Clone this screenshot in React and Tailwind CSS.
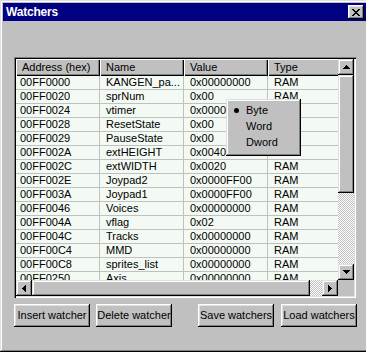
import React from "react";

const raised =
  "shadow-[inset_-1px_-1px_#000,inset_1px_1px_#dfdfdf,inset_-2px_-2px_#808080,inset_2px_2px_#fff]";
const btnRaised =
  "shadow-[inset_-1px_-1px_#000,inset_1px_1px_#fff,inset_-2px_-2px_#808080,inset_2px_2px_#dfdfdf]";
const dither =
  "[background-image:repeating-conic-gradient(#c0c0c0_0_25%,#fff_0_50%)] [background-size:2px_2px]";

const rows = [
  ["00FF0000", "KANGEN_pa...", "0x00000000", "RAM"],
  ["00FF0020", "sprNum", "0x00", "RAM"],
  ["00FF0024", "vtimer", "0x0000", "RAM"],
  ["00FF0028", "ResetState", "0x00", "RAM"],
  ["00FF0029", "PauseState", "0x00", "RAM"],
  ["00FF002A", "extHEIGHT", "0x0040", "RAM"],
  ["00FF002C", "extWIDTH", "0x0020", "RAM"],
  ["00FF002E", "Joypad2", "0x0000FF00", "RAM"],
  ["00FF003A", "Joypad1", "0x0000FF00", "RAM"],
  ["00FF0046", "Voices", "0x00000000", "RAM"],
  ["00FF004A", "vflag", "0x02", "RAM"],
  ["00FF004C", "Tracks", "0x00000000", "RAM"],
  ["00FF00C4", "MMD", "0x00000000", "RAM"],
  ["00FF00C8", "sprites_list", "0x00000000", "RAM"],
  ["00FF0250", "Axis", "0x00000000", "RAM"],
];

function Arrow({ dir }) {
  const paths = {
    up: "M3 0h1v1h1v1h1v1h1v1H0V3h1V2h1V1h1z",
    down: "M0 0h7v1H6v1H5v1H4v1H3V3H2V2H1V1H0z",
    left: "M3 0h1v7H3V6H2V5H1V4H0V3h1V2h1V1h1z",
    right: "M0 0h1v1h1v1h1v1h1v1H3v1H2v1H1v1H0z",
  };
  const vert = dir === "up" || dir === "down";
  return (
    <svg
      width={vert ? 7 : 4}
      height={vert ? 4 : 7}
      viewBox={vert ? "0 0 7 4" : "0 0 4 7"}
      shapeRendering="crispEdges"
    >
      <path d={paths[dir]} fill="#000" />
    </svg>
  );
}

function ScrollBtn({ dir }) {
  return (
    <div
      className={`w-[16px] h-[16px] shrink-0 bg-[#c0c0c0] flex items-center justify-center ${raised}`}
    >
      <Arrow dir={dir} />
    </div>
  );
}

function Button({ children, className = "" }) {
  return (
    <div
      className={`w-[76px] h-[23px] bg-[#c0c0c0] flex items-center justify-center text-[11px] text-black whitespace-nowrap ${btnRaised} ${className}`}
    >
      {children}
    </div>
  );
}

export default function App() {
  return (
    <div className="w-[366px] h-[352px] overflow-hidden bg-[#c0c0c0] font-['Liberation_Sans',Arial,sans-serif]">
      <div className="w-[369px] h-[352px] bg-[#c0c0c0] flex flex-col pt-[3px] px-[3px] shadow-[inset_-1px_-1px_#000,inset_1px_1px_#dfdfdf,inset_-2px_-2px_#808080,inset_2px_2px_#fff]">
        {/* Title bar */}
        <div className="h-[18px] bg-[#000080] flex items-center justify-between pl-[3px] pr-[2px]">
          <span className="text-white font-bold text-[12px] leading-none tracking-[-0.2px]">
            Watchers
          </span>
          <div
            className={`w-[16px] h-[14px] bg-[#c0c0c0] flex items-center justify-center ${btnRaised}`}
          >
            <svg width="8" height="7" viewBox="0 0 8 7" shapeRendering="crispEdges">
              <path
                d="M0 0h2v1h1v1h2V1h1V0h2v1H7v1H6v1H5v1h1v1h1v1h1v1H6V6H5V5H3v1H2v1H0V6h1V5h1V4h1V3H2V2H1V1H0z"
                fill="#000"
              />
            </svg>
          </div>
        </div>

        {/* Body */}
        <div className="pt-[36px] pl-[11px] flex flex-col">
          {/* List box */}
          <div className="relative w-[342px] h-[241px] p-[2px] bg-[#c0c0c0] shadow-[inset_1px_1px_#808080,inset_2px_2px_#000,inset_-1px_-1px_#fff,inset_-2px_-2px_#dfdfdf]">
            <div className="grid grid-cols-[322px_16px] grid-rows-[221px_16px] w-[338px] h-[237px]">
              {/* Content */}
              <div className="overflow-hidden bg-[#f3faf3] text-[11px] text-black">
                <div className="flex h-[17px] bg-[#c0c0c0]">
                  {["Address (hex)", "Name", "Value", "Type"].map((h, i) => (
                    <div
                      key={h}
                      className={`h-[17px] shrink-0 flex items-center pl-[6px] leading-none ${
                        i === 3 ? "w-[100px]" : "w-[84px]"
                      } shadow-[inset_1px_1px_#fff,inset_-1px_-1px_#000,inset_-2px_-2px_#808080]`}
                    >
                      {h}
                    </div>
                  ))}
                </div>
                {rows.map((r) => (
                  <div
                    key={r[0]}
                    className="flex h-[14px] border-b border-[#c0c0c0] whitespace-nowrap"
                  >
                    {r.map((c, i) => (
                      <div
                        key={i}
                        className={`shrink-0 h-[13px] leading-[13px] overflow-hidden ${
                          i === 0 ? "pl-[4px]" : "pl-[6px]"
                        } ${i === 3 ? "w-[100px]" : "w-[84px] border-r border-[#c0c0c0]"}`}
                      >
                        {c}
                      </div>
                    ))}
                  </div>
                ))}
              </div>

              {/* Vertical scrollbar */}
              <div className="flex flex-col h-[221px]">
                <ScrollBtn dir="up" />
                <div className={`h-[118px] shrink-0 bg-[#c0c0c0] ${raised}`} />
                <div className={`flex-1 ${dither}`} />
                <ScrollBtn dir="down" />
              </div>

              {/* Horizontal scrollbar */}
              <div className="flex w-[322px] h-[16px]">
                <ScrollBtn dir="left" />
                <div className={`w-[278px] shrink-0 h-[16px] bg-[#c0c0c0] ${raised}`} />
                <div className={`flex-1 ${dither}`} />
                <ScrollBtn dir="right" />
              </div>

              {/* Corner */}
              <div className="bg-[#c0c0c0]" />
            </div>

            {/* Context menu */}
            <div
              className={`absolute left-[212px] top-[42px] w-[75px] h-[57px] bg-[#c0c0c0] pt-[3px] text-[11px] text-black ${raised}`}
            >
              {[
                ["Byte", true],
                ["Word", false],
                ["Dword", false],
              ].map(([label, on]) => (
                <div key={label} className="h-[16px] flex items-center pl-[8px]">
                  <div className="w-[12px] flex items-center">
                    {on && <div className="w-[5px] h-[5px] rounded-full bg-black" />}
                  </div>
                  <span className="leading-none">{label}</span>
                </div>
              ))}
            </div>
          </div>

          {/* Buttons */}
          <div className="flex mt-[6px]">
            <Button>Insert watcher</Button>
            <Button className="ml-[6px]">Delete watcher</Button>
            <Button className="ml-[26px]">Save watchers</Button>
            <Button className="ml-[7px]">Load watchers</Button>
          </div>
        </div>
      </div>
    </div>
  );
}
